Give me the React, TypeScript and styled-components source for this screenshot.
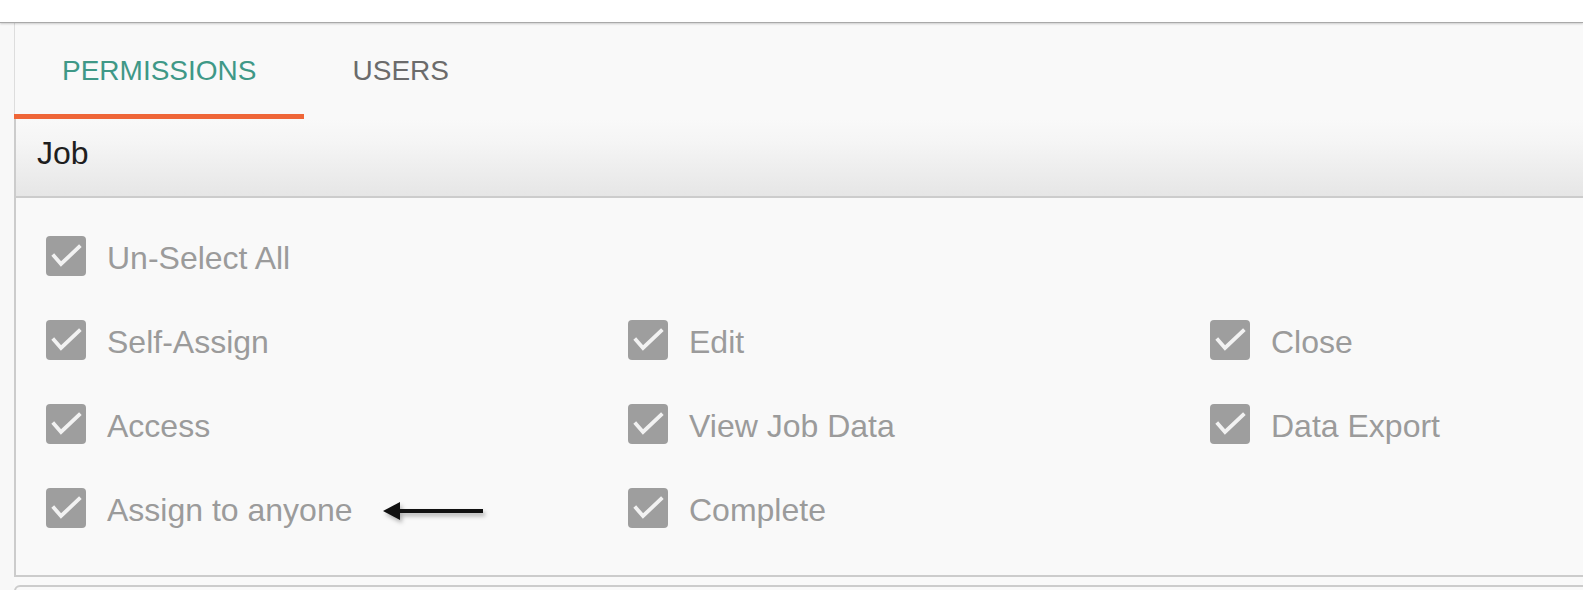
import React from 'react'
import styled, { createGlobalStyle } from 'styled-components'

const GlobalStyle = createGlobalStyle`
    html, body {
        margin: 0;
        padding: 0;
        overflow: hidden;
        background: #ffffff;
        font-family: "Liberation Sans", Arial, Helvetica, sans-serif;
    }
`

const firstRow = ['Self-Assign', 'Edit', 'Close']
const secondRow = ['Access', 'View Job Data', 'Data Export']
const thirdRow = ['Assign to anyone', 'Complete']

function CheckIcon() {
    return (
        <svg width="40" height="40" viewBox="0 0 40 40">
            <polyline
                points="8,20 15,28 33,11"
                fill="none"
                stroke="#f2f2f2"
                strokeWidth="3.8"
                strokeLinecap="square"
            />
        </svg>
    )
}

function ArrowMark() {
    return (
        <Arrow width="108" height="28" viewBox="0 0 108 28">
            <line x1="16" y1="11" x2="102" y2="11" stroke="#111" strokeWidth="4" />
            <polygon points="2,11 19,2 19,20" fill="#111" />
        </Arrow>
    )
}

function Permission({ label, pointed }: { label: string; pointed?: boolean }) {
    return (
        <Item>
            <Box>
                <CheckIcon />
            </Box>
            <Label>{label}</Label>
            {pointed && <ArrowMark />}
        </Item>
    )
}

function App() {
    return (
        <React.Fragment>
            <GlobalStyle />
            <TopStrip />
            <Page>
                <Gutter />
                <Panel>
                    <Tabs>
                        <Tab active>PERMISSIONS</Tab>
                        <Tab>USERS</Tab>
                    </Tabs>
                    <Card>
                        <CardHeader>Job</CardHeader>
                        <CardBody>
                            <Grid>
                                <Permission label="Un-Select All" />
                            </Grid>
                            <Grid>
                                {firstRow.map((l) => <Permission key={l} label={l} />)}
                                {secondRow.map((l) => <Permission key={l} label={l} />)}
                                {thirdRow.map((l, i) => <Permission key={l} label={l} pointed={i === 0} />)}
                            </Grid>
                        </CardBody>
                    </Card>
                    <NextCard />
                </Panel>
            </Page>
        </React.Fragment>
    )
}

export default App

const TopStrip = styled.div`
    position: relative;
    z-index: 1;
    height: 22px;
    background: #ffffff;
    border-bottom: 1px solid #a9a9a9;
    box-shadow: 0 1px 2px rgba(0, 0, 0, 0.18);
`

const Page = styled.div`
    display: flex;
    background: #f8f8f8;
    height: 567px;
    overflow: hidden;
`

const Gutter = styled.div`
    width: 14px;
    flex: none;
    background: #f8f8f8;
`

const Panel = styled.div`
    flex: none;
    width: 1800px;
    background: #f9f9f9;
`

const Tabs = styled.div`
    display: flex;
    height: 96px;
    border-left: 1px solid #dddddd;
`

const Tab = styled.div<{ active?: boolean }>`
    display: flex;
    align-items: center;
    justify-content: center;
    box-sizing: border-box;
    padding: 4px 48px 0;
    margin-left: ${(p) => (p.active ? '-1px' : '0')};
    font-size: 28px;
    color: ${(p) => (p.active ? '#3f9887' : '#6b6b6b')};
    border-bottom: 5px solid ${(p) => (p.active ? '#ef6638' : 'transparent')};
    cursor: pointer;
`

const Card = styled.div`
    border-left: 2px solid #cccccc;
    border-bottom: 2px solid #cccccc;
`

const CardHeader = styled.div`
    display: flex;
    align-items: center;
    box-sizing: border-box;
    height: 79px;
    padding: 0 0 8px 21px;
    font-size: 32px;
    color: #1e1e1e;
    background: linear-gradient(to bottom, #f9f9f9 0%, #f5f5f5 30%, #e6e6e6 100%);
    border-bottom: 2px solid #cccccc;
`

const CardBody = styled.div`
    display: flex;
    flex-direction: column;
    gap: 44px;
    padding: 38px 0 47px 30px;
`

const Grid = styled.div`
    display: grid;
    grid-template-columns: repeat(3, 582px);
    row-gap: 44px;
`

const Item = styled.label`
    display: flex;
    align-items: center;
    height: 40px;
    cursor: pointer;
`

const Box = styled.span`
    display: flex;
    width: 40px;
    height: 40px;
    flex: none;
    border-radius: 4px;
    background: #9e9e9e;
`

const Label = styled.span`
    margin: 5px 0 0 21px;
    font-size: 32px;
    color: #9b9b9b;
    white-space: nowrap;
`

const Arrow = styled.svg`
    flex: none;
    margin: 12px 0 0 28px;
    filter: drop-shadow(2px 3px 2px rgba(0, 0, 0, 0.3));
`

const NextCard = styled.div`
    margin-top: 8px;
    height: 60px;
    border: 2px solid #cccccc;
    border-radius: 6px 0 0 0;
    background: #f9f9f9;
`
